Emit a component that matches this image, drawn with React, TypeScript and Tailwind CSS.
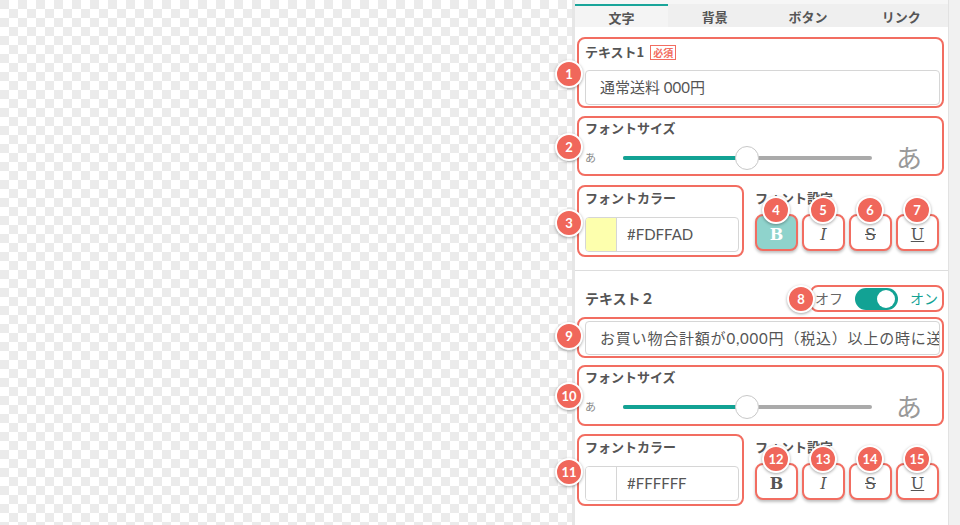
import React from 'react';

const Badge: React.FC<{ n: number; className: string }> = ({ n, className }) => (
  <div
    className={`absolute z-10 w-[28px] h-[28px] rounded-full bg-[#f0675b] border-2 border-white shadow-[0_1px_3px_rgba(0,0,0,0.35)] text-white font-bold text-[13px] leading-none flex items-center justify-center font-['Lato',sans-serif] ${className}`}
  >
    {n}
  </div>
);

const Label: React.FC<{ children: React.ReactNode }> = ({ children }) => (
  <div className="text-[13px] leading-[16px] font-bold text-[#555] font-['Noto_Sans_CJK_JP',sans-serif]">{children}</div>
);

// transparency backdrop behind the preview
const Checker: React.FC = () => (
  <svg width="572" height="525" viewBox="0 0 572 525" className="block">
    <defs>
      <pattern id="chk" x="0" y="0" width="18" height="18" patternUnits="userSpaceOnUse">
        <rect x="0" y="0" width="18" height="18" fill="#ffffff" />
        <rect x="0" y="0" width="9" height="9" fill="#ebebeb" />
        <rect x="9" y="9" width="9" height="9" fill="#ebebeb" />
      </pattern>
    </defs>
    <rect x="0" y="0" width="572" height="525" fill="url(#chk)" />
  </svg>
);

const SizeSlider: React.FC = () => (
  <div className="flex items-center h-[28px] pl-[4px]">
    <span className="w-[38px] text-[11px] text-[#888]">あ</span>
    <div className="relative w-[249px] h-[4px] rounded-full bg-[#aaaaaa]">
      <div className="absolute left-0 top-0 h-[4px] w-[124px] rounded-full bg-[#12a294]" />
      <div className="absolute left-[112px] top-[-10px] w-[24px] h-[24px] rounded-full bg-white border border-[#c8c8c8]" />
    </div>
    <span className="ml-auto mr-[18px] text-[26px] leading-none text-[#999]">あ</span>
  </div>
);

const StyleButtons: React.FC<{ active?: boolean; start: number }> = ({ active, start }) => {
  const items = [
    { ch: 'B', cls: 'font-bold' },
    { ch: 'I', cls: 'italic' },
    { ch: 'S', cls: 'line-through' },
    { ch: 'U', cls: 'underline' },
  ];
  return (
    <div className="flex gap-[4px] mt-[8px]">
      {items.map((it, i) => (
        <div key={it.ch} className="relative">
          <Badge n={start + i} className="left-[7px] top-[-18px]" />
          <div
            className={`w-[43px] h-[37px] rounded-[8px] border-2 border-[#f26d61] shadow-[0_2px_3px_rgba(0,0,0,0.25)] flex items-center justify-center pt-[5px] text-[16px] font-['DejaVu_Serif',serif] ${
              active && i === 0 ? 'bg-[#8fd3cc] text-white' : 'bg-white text-[#555]'
            } ${it.cls}`}
          >
            {it.ch}
          </div>
        </div>
      ))}
    </div>
  );
};

const ColorRow: React.FC<{ color: string; swatch: string; start: number }> = ({ color, swatch, start }) => (
  <div className="flex">
    <div className="relative w-[167px] h-[72px] rounded-[8px] border-2 border-[#f26d61] pl-[6px] pr-[3px] pt-[3px]">
      <Badge n={start} className="left-[-24px] top-[22px]" />
      <Label>フォントカラー</Label>
      <div className="mt-[11px] h-[35px] flex rounded-[4px] border border-[#d6d6d6] overflow-hidden">
        <div className={`w-[31px] border-r border-[#d6d6d6] ${swatch}`} />
        <div className="pl-[10px] flex items-center text-[15px] text-[#555]">{color}</div>
      </div>
    </div>
    <div className="ml-[11px] pt-[5px]">
      <Label>フォント設定</Label>
      <StyleButtons active={start === 3} start={start + 1} />
    </div>
  </div>
);

const App: React.FC = () => {
  return (
    <div className="w-[960px] h-[525px] flex overflow-hidden font-['Lato','Noto_Sans_CJK_JP',sans-serif] bg-white">
      <div className="w-[572px] h-[525px] shrink-0">
        <Checker />
      </div>
      <div className="w-[376px] h-full border-l-[3px] border-[#e6e6e6] bg-white flex flex-col">
        <div className="h-[4px] bg-[#f6f6f6]" />
        <div className="flex h-[23px] bg-[#efefef] text-[13px] font-bold text-[#555] font-['Noto_Sans_CJK_JP',sans-serif]">
          <div className="w-[93px] border-t-2 border-[#1aa59a] bg-[#f4f4f4] flex items-center justify-center pt-[3px]">文字</div>
          <div className="flex-1 flex items-center justify-center pt-[3px]">背景</div>
          <div className="flex-1 flex items-center justify-center pt-[3px]">ボタン</div>
          <div className="flex-1 flex items-center justify-center pt-[3px]">リンク</div>
        </div>

        <div className="flex flex-col pl-[2px] pr-[4px] pt-[10px]">
          <div className="relative h-[71px] rounded-[8px] border-2 border-[#f26d61] pl-[6px] pr-[2px] pt-[5px]">
            <Badge n={1} className="left-[-24px] top-[21px]" />
            <div className="flex items-center gap-[6px]">
              <Label>テキスト1</Label>
              <span className="border border-[#f26d61] text-[#f26d61] text-[10px] leading-[13px] px-[2px] font-bold font-['Noto_Sans_CJK_JP',sans-serif]">必須</span>
            </div>
            <div className="mt-[10px] h-[35px] rounded-[4px] border border-[#d6d6d6] pl-[14px] flex items-center text-[15px] text-[#555]">
              通常送料 000円
            </div>
          </div>

          <div className="relative mt-[8px] h-[60px] rounded-[8px] border-2 border-[#f26d61] pl-[6px] pr-[2px] pt-[2px]">
            <Badge n={2} className="left-[-24px] top-[15px]" />
            <Label>フォントサイズ</Label>
            <div className="mt-[8px] -ml-[4px]">
              <SizeSlider />
            </div>
          </div>

          <div className="mt-[9px]">
            <ColorRow color="#FDFFAD" swatch="bg-[#FDFFAD]" start={3} />
          </div>

          <div className="mt-[13px] h-px bg-[#dddddd] -ml-[2px] -mr-[4px]" />

          <div className="mt-[14px] h-[27px] flex items-center justify-between">
            <div className="pl-[8px] text-[14px] font-bold text-[#555] font-['Noto_Sans_CJK_JP',sans-serif]">テキスト２</div>
            <div className="relative w-[134px] h-[27px] rounded-[8px] border-2 border-[#f26d61] flex items-center pl-[3px]">
              <Badge n={8} className="left-[-25px] top-[-2px]" />
              <span className="text-[14px] text-[#666]">オフ</span>
              <div className="ml-[12px] w-[43px] h-[22px] rounded-full bg-[#12a294] relative">
                <div className="absolute right-[3px] top-[2px] w-[18px] h-[18px] rounded-full bg-white" />
              </div>
              <span className="ml-[12px] text-[14px] text-[#12a294]">オン</span>
            </div>
          </div>

          <div className="relative mt-[5px] h-[41px] rounded-[8px] border-2 border-[#f26d61] pl-[6px] pr-[2px] pt-[2px]">
            <Badge n={9} className="left-[-24px] top-[3px]" />
            <div className="h-[34px] rounded-[4px] border border-[#d6d6d6] pl-[14px] flex items-center text-[15px] tracking-[0.8px] text-[#555] overflow-hidden whitespace-nowrap">
              お買い物合計額が0,000円（税込）以上の時に送料無料
            </div>
          </div>

          <div className="relative mt-[7px] h-[61px] rounded-[8px] border-2 border-[#f26d61] pl-[6px] pr-[2px] pt-[2px]">
            <Badge n={10} className="left-[-24px] top-[15px]" />
            <Label>フォントサイズ</Label>
            <div className="mt-[8px] -ml-[4px]">
              <SizeSlider />
            </div>
          </div>

          <div className="mt-[8px]">
            <ColorRow color="#FFFFFF" swatch="bg-white" start={11} />
          </div>
        </div>
      </div>
      <div className="flex-1 h-full bg-[#f1f1f1] border-l border-[#e2e2e2]" />
    </div>
  );
};

export default App;
